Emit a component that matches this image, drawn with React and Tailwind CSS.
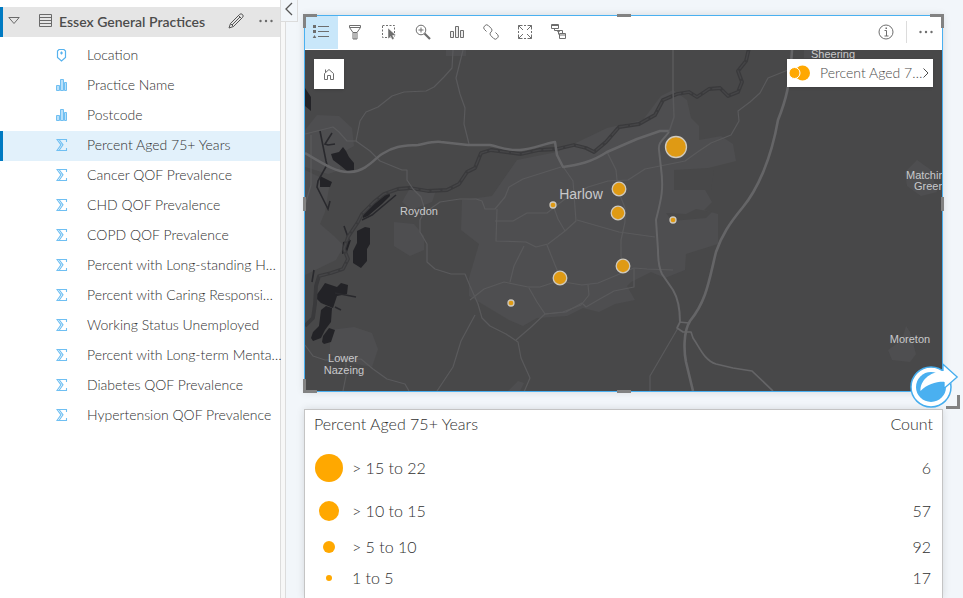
import { useState } from 'react';

const fields = [
    { name: 'Location', type: 'location' },
    { name: 'Practice Name', type: 'string' },
    { name: 'Postcode', type: 'string' },
    { name: 'Percent Aged 75+ Years', type: 'number' },
    { name: 'Cancer QOF Prevalence', type: 'number' },
    { name: 'CHD QOF Prevalence', type: 'number' },
    { name: 'COPD QOF Prevalence', type: 'number' },
    { name: 'Percent with Long-standing H…', type: 'number' },
    { name: 'Percent with Caring Responsi…', type: 'number' },
    { name: 'Working Status Unemployed', type: 'number' },
    { name: 'Percent with Long-term Menta…', type: 'number' },
    { name: 'Diabetes QOF Prevalence', type: 'number' },
    { name: 'Hypertension QOF Prevalence', type: 'number' },
];

const legend = [
    { label: '> 15 to 22', count: 6, dot: 'size-7', row: 'h-[46px]' },
    { label: '> 10 to 15', count: 57, dot: 'size-5', row: 'h-[39px]' },
    { label: '> 5 to 10', count: 92, dot: 'size-3', row: 'h-[33px]' },
    { label: '1 to 5', count: 17, dot: 'size-1.5', row: 'h-[29px]' },
];

const practices = [
    { x: 676, y: 147, r: 10.5 },
    { x: 619, y: 189, r: 6.8 },
    { x: 618, y: 213, r: 6.8 },
    { x: 553, y: 205, r: 3 },
    { x: 673, y: 220, r: 3 },
    { x: 623, y: 266, r: 6.8 },
    { x: 560, y: 278, r: 6.8 },
    { x: 511, y: 303, r: 3 },
];

const tools = [
    {
        name: 'Legend',
        art: (
            <>
                <path d="M5 2.500h11M5 7.500h11M5 12.500h11" />
                <path d="M0 1h3v3H0zM0 6h3v3H0zM1.500 11l1.800 3H-.3z" fill="currentColor" stroke="none" />
            </>
        ),
    },
    {
        name: 'Filter',
        art: <path d="M2.500 1.500h11v2l-3.500 5h-4l-3.500-5zM2.500 3.500h11M6 8.500V15h4V8.500M8 9v6" />,
    },
    {
        name: 'Selection tools',
        art: (
            <>
                <path d="M1.500 1.500h12v12h-12z" strokeDasharray="2 1.500" />
                <path d="M7 4v11l2.600-2.400 1.600 3.200 2-1-1.600-3.200 3.400-.3z" fill="currentColor" stroke="#fff" strokeWidth=".5" />
            </>
        ),
    },
    {
        name: 'Zoom tools',
        art: (
            <>
                <circle cx="6" cy="6" r="4.800" />
                <path d="M3.500 6h5M6 3.500v5" />
                <path d="M9.500 9.500l5.500 5.500" strokeWidth="2.200" />
            </>
        ),
    },
    {
        name: 'Chart type',
        art: <path d="M1.500 7.500h3v6h-3zM6.500 2.500h3v11h-3zM11.500 6.500h3v7h-3z" fill="#ececec" />,
    },
    {
        name: 'Sync extent',
        art: (
            <>
                <path d="M3.500 7.500L1.400 5.400a2.300 2.300 0 0 1 0-3.200l.7-.7a2.300 2.300 0 0 1 3.200 0l3 3a2.300 2.300 0 0 1 0 3.200l-.8.8" />
                <path d="M12.500 8.500l2.100 2.100a2.300 2.300 0 0 1 0 3.200l-.7.7a2.300 2.300 0 0 1-3.200 0l-3-3a2.300 2.300 0 0 1 0-3.200l.8-.8" />
            </>
        ),
    },
    {
        name: 'Maximize',
        art: (
            <>
                <path d="M1.500 5.500v-4h4M10.500 1.500h4v4M14.500 10.500v4h-4M5.500 14.500h-4v-4" />
                <path d="M1.500 1.500l4.500 4.500M14.500 1.500L10 6M14.500 14.500L10 10M1.500 14.500L6 10" />
                <path d="M1.500 7v2M14.500 7v2M7 1.500h2M7 14.500h2" />
            </>
        ),
    },
    {
        name: 'Actions',
        art: (
            <>
                <path d="M.5.5h7v4h-7zM.5 1.500h7M8.500 9.500h6v5h-6zM8.500 11h6" />
                <path d="M3.500 4.500v2h8v3M7.500 6.500v4" />
                <path d="M5.500 6.500h4l-2 2.500z" fill="currentColor" stroke="none" />
            </>
        ),
    },
];

function FieldIcon({ type }) {
    if (type === 'location') {
        return (
            <svg className="h-3.5 w-3 shrink-0 text-[#56b2ee]" viewBox="0 0 12 14" fill="none" stroke="currentColor" strokeWidth="1.200">
                <path d="M3 1.500h5l1.500 1.500V9.500l-4 3.500-4-3.500V3z" />
                <path d="M5.500 3.500v3M4 5h3" />
            </svg>
        );
    }
    if (type === 'string') {
        return (
            <svg className="size-3 shrink-0 text-[#6fbff2]" viewBox="0 0 12 12" fill="#b9e0f9" stroke="currentColor">
                <path d="M.5 6.500h3v5h-3zM4.500.5h3v11h-3zM8.500 3.500h2v8h-2z" />
            </svg>
        );
    }
    return (
        <svg className="size-3 shrink-0 text-[#6fbff2]" viewBox="0 0 12 12" fill="none" stroke="currentColor" strokeWidth="1.100">
            <path d="M10.500 3V.5H1l4 5.300-4 5.700h9.500V9" />
            <path d="M3 .5l4 5.300-4 5.700" />
        </svg>
    );
}

function Sidebar() {
    const [selected, setSelected] = useState('Percent Aged 75+ Years');

    return (
        <aside className="w-[281px] shrink-0 border-r border-[#dcdcdc] bg-white pt-[7px]">
            <header className="flex h-[30px] items-center border-l-[3px] border-[#007ac2] bg-[#e5e5e5] px-[5px] pb-0.5">
                <button aria-label="Collapse dataset" className="text-[#6a6a6a]">
                    <svg className="size-3" viewBox="0 0 12 12" fill="none" stroke="currentColor">
                        <path d="M.8 2.500h10.400L6 8.500z" />
                    </svg>
                </button>
                <svg className="ml-[19px] h-[14px] w-[13px] text-[#6a6a6a]" viewBox="0 0 13 14" fill="none" stroke="currentColor">
                    <path d="M.5.5h12v12H.5zM.5 3.500h12M.5 6.500h12M.5 9.500h12" />
                </svg>
                <h2 className="ml-[7px] flex-1 pt-0.5 text-sm font-semibold whitespace-nowrap text-[#4c4c4c]">Essex General Practices</h2>
                <button aria-label="Rename dataset" className="mr-[14px] text-[#555]">
                    <svg className="size-4" viewBox="0 0 16 16" fill="none" stroke="currentColor" strokeLinejoin="round">
                        <path d="M1 15l1.500-4.500L11.500 1.500a1.800 1.800 0 0 1 3 3L5.500 13.500zM2.500 10.500l3 3M10.500 2.500l3 3M4 12l8-8" />
                    </svg>
                </button>
                <button aria-label="Dataset options" className="mr-px text-[#6a6a6a]">
                    <svg className="size-4" viewBox="0 0 16 16" fill="currentColor">
                        <circle cx="2.500" cy="8" r="1.200" />
                        <circle cx="8" cy="8" r="1.200" />
                        <circle cx="13.500" cy="8" r="1.200" />
                    </svg>
                </button>
            </header>
            <ul className="pt-1">
                {fields.map(field => (
                    <li key={field.name}>
                        <button
                            onClick={() => setSelected(field.name)}
                            className={`flex h-[30px] w-full items-center gap-[19px] border-l-[3px] pb-0.5 pl-[53px] text-left text-sm font-light whitespace-nowrap ${selected === field.name
                                ? 'border-[#007ac2] bg-[#e2f1fb]'
                                : 'border-transparent'}`}
                        >
                            <FieldIcon type={field.type} />
                            <span>{field.name}</span>
                        </button>
                    </li>
                ))}
            </ul>
        </aside>
    );
}

function Basemap() {
    return (
        <svg className="block aspect-[637/341] w-full bg-[#484849]" viewBox="305 50 637 341" fill="none" role="img" aria-label="Map of general practices around Harlow">
            {/* built-up areas */}
            <g fill="#4e4e50">
                <path d="M305 130l12-15 22 1 13 12 2 18-14 8 0 16-12 4-23-7zM305 170l25 12-5 30-5 12 14 12 10 10-8 14-31 15z" />
                <path d="M394 222l20 2 10 12 0 14-14 6-16-10zM410 188l26 2-4 12-20 8-10-8z" />
                <path d="M462 200l30-4 25-36 40-8 50-24 36-8 18-24 12-6 14 10 4 18 8 8 0 14 22-4 12 8 3 17-28 7-34 2 0 18 30 0 8 14-8 8 14 4 0 30-32 10-1 16-20 8-14-6-20 10-4 4 8 14-20 4-16 8-16-4-16 8-30 2-14 8-14-6-40-24 0-18 10-34-18-14z" />
                <path d="M330 330l24-3 18 6 6 16-6 18-22-4-20-8zM905 172l12-12 14 10 6 22-16 4-14-10zM888 350l14-10 4-14 4 6 6 22-6 8-18-2z" />
                <path d="M804 50h26v8h-26zM446 50h20v6h-20zM508 391l10-10 6 2-4 8z" />
            </g>
            <path d="M674 170h40l-3 20-37 0zM666 213l20 1 10-5 16 3-6 6-34 3z" fill="#484849" />

            {/* lakes */}
            <g fill="#232327">
                <path d="M305 88l6 9v14l-6-5zM331 154l8-2 4-5 3 4 3 6 5 6 0 7-7 1-6-5-8-6zM320 176l12 6-2 5-10 0z" />
                <path d="M361 213l20-18 8-4 1 5-8 8-14 12-5 2zM357 231l8-4 5 1v16l-3 5v12l-6 7-8-5 0-12 4-8zM343 242l8-2-4 12-5 2z" />
                <path d="M321 289l4-6 12 4 4-4 7 2-1 9-10 2-4 12-12-5-6-6zM321 310l5-4 6 2-1 14-6 8-4 8-8 3-2-3 2-6 6-6zM323 336l6-8 6 2-4 12-7 2-2-2z" />
            </g>
            <g stroke="#29292d" strokeWidth="1.600">
                <path d="M320 131l6 30 1 4-9 16-1 6 6 12 5 10 2-8M332 133l-7 11 3 1 7-1" />
                <path d="M335 293l21 4M335 307l6 3M314 270l-2 12M362 220l10-5 24-20M344 226l5 14" />
            </g>

            {/* river */}
            <path d="M305 326l8-8 2-14 1-18 3-10 12-3 12-4 5-10-4-10 4-12 10-15 4-8 12-12 10-8 14-5 12-1 18 3 19-1 12-6 8-12 8-4 6-15 10-3 30 4 18-4 18-1 17-4 12 3 8 4 12-10 13-15 20-3 16-9 8-15 14-6 12-2 8 5 12-8 11-1 8 8 10-4 4-10-4-11 8-10 3-13" stroke="#3a3a3c" strokeWidth="3.800" strokeLinejoin="round" />
            <path d="M319 276l12-3 12-4 5-10-4-10 4-12 10-15 4-8 12-12 10-8 14-5 12-1 18 3 19-1 12-6 8-12 8-4 6-15 10-3 30 4 18-4 18-1 17-4 12 3 8 4 12-10 13-15 20-3 16-9 8-15 14-6 12-2 8 5 12-8 11-1 8 8 10-4 4-10-4-11 8-10 3-13" stroke="#454547" strokeWidth="1.400" strokeDasharray="9 2" />

            {/* minor roads */}
            <g stroke="#5a5a5c" strokeWidth="1.200" strokeLinejoin="round">
                <path d="M305 134l28-7 6 5 8 9h9l14 10 10 10 22 9 5 0 0 10 6 9 8 8 4 13-5 10 0 12 7 12 0 18 8 7 16 5h14l5 12 8 18 4 14 8 8 16 8 12 8 3 16 9 20-6 14 4 8" />
                <path d="M356 141l4-20 6-9 12-5 14-11 12-4 22-1 8-4 10-10 8-9 1-18M356 141l1 1M463 50l-7 28 4 16 5 14-1 16 5 20" />
                <path d="M430 209l10-7 20-3h16l6 2 3 8h10l10-12 4-10 14-8 38-12M497 209l-1 32 30 1 10 5 12-3 17-13 11-10-3-40-9-13M495 221l18 0 14-8h20l18-14 23-12 20-6 20-1 17-11 40-8 14-10 12-8 20-8 8-14-1-10 12-9 10-9 8-15 20-8" />
                <path d="M607 152l9 18 2 20 7 18 0 14-4 18 0 16 2 10M577 220l42 12 36 5M553 205l5 14 7 12M547 245l8 20 5 12M524 246l-10 20-4 16M470 300l14-11 20-7 24 5h12l18-6 24 4 16-2 36-15 13 1 26 1M588 285l1 10-8 10-18 7-18 2-8-12-8-14" />
                <path d="M634 269l0 18-20 4-16 9-12 7-4-4-16 9-21 2-15 14-14 12M475 315l-14 26-8 26-16 24M305 345l8 11 12 4 36-1 12 10 14 10 18 5 4 7M346 360l0 16-3 15" />
                <path d="M678 328l-28 48 0 15M305 205l6-20 0-50" />
            </g>

            {/* main roads */}
            <g stroke="#656567" strokeWidth="2" strokeLinejoin="round">
                <path d="M305 153C325 165 338 173 350 172C367 171 375 158 382 154C396 145 405 146 418 145C428 143 434 141 441 142L468 145L490 145C500 147 508 151 520 150C533 149 543 144 555 142L557 155L563 167C578 165 592 162 607 152L637 139L660 131H669" strokeWidth="2.500" />
                <path d="M673 50V90L674 117L669 132" stroke="#59595b" strokeWidth="1.500" />
                <path d="M669 132C663 140 658 142 659 150L661 168C664 190 661 200 656 220L658 250C658 262 660 270 662 274L673 290C679 300 680 310 680 322" />
                <path d="M792 50C790 85 786 100 778 120C771 160 757 190 743 207C729 224 722 235 716 252C709 280 707 300 690 321C683 332 684 352 686 362L693 391" strokeWidth="2.600" />
                <path d="M680 322l-3 6 6 4 8 0 2 6C700 348 704 360 716 364L733 368L752 371L773 391M679 322l10 1" strokeWidth="1.700" />
            </g>

            <g fill="#c9c9cb" className="font-['Liberation_Sans',Arial,sans-serif] text-[11px]">
                <text x="833" y="58" textAnchor="middle">Sheering</text>
                <text x="419" y="215" textAnchor="middle">Roydon</text>
                <text x="343" y="362" textAnchor="middle">Lower</text>
                <text x="344" y="374" textAnchor="middle">Nazeing</text>
                <text x="910" y="343" textAnchor="middle">Moreton</text>
                <text x="906" y="179">Matchin</text>
                <text x="914" y="190">Green</text>
                <text x="581" y="199" textAnchor="middle" className="text-[14px]">Harlow</text>
            </g>

            <g fill="#df9a14" stroke="#cfc9bd" strokeWidth="1.300">
                {practices.map(p => (
                    <circle key={`${p.x}-${p.y}`} cx={p.x} cy={p.y} r={p.r} />
                ))}
            </g>
        </svg>
    );
}

function ResizeHandles() {
    return (
        <div className="pointer-events-none">
            <span className="absolute -top-0.5 -left-0.5 size-3.5 border-t-[3px] border-l-[3px] border-[#828282]" />
            <span className="absolute -top-0.5 -right-0.5 size-3.5 border-t-[3px] border-r-[3px] border-[#828282]" />
            <span className="absolute -bottom-0.5 -left-0.5 size-3.5 border-b-[3px] border-l-[3px] border-[#828282]" />
            <span className="absolute -right-[18px] -bottom-[18px] size-3.5 border-r-[3px] border-b-[3px] border-[#828282]" />
            <span className="absolute inset-x-0 -top-0.5 mx-auto h-[3px] w-3.5 bg-[#828282]" />
            <span className="absolute inset-x-0 -bottom-0.5 mx-auto h-[3px] w-3.5 bg-[#828282]" />
            <span className="absolute inset-y-0 -left-0.5 my-auto h-3.5 w-[3px] bg-[#828282]" />
            <span className="absolute inset-y-0 -right-0.5 my-auto h-3.5 w-[3px] bg-[#828282]" />
        </div>
    );
}

function MapCard() {
    const [active, setActive] = useState('Legend');

    return (
        <section className="relative border border-[#4ab0f0] bg-white shadow-[0_0_8px_rgba(0,0,0,0.12)]">
            <div className="flex h-[34px] items-center justify-between text-[#6e6e6e]">
                <div className="flex h-full gap-px">
                    {tools.map(tool => (
                        <button
                            key={tool.name}
                            aria-label={tool.name}
                            onClick={() => setActive(tool.name)}
                            className={`flex h-[33px] w-[33px] items-center justify-center pr-px pb-0.5 ${active === tool.name ? 'bg-[#c9e7fa]' : ''}`}
                        >
                            <svg className="size-4 overflow-visible" viewBox="0 0 16 16" fill="none" stroke="currentColor">{tool.art}</svg>
                        </button>
                    ))}
                </div>
                <div className="flex items-center pr-2 pb-0.5">
                    <button aria-label="Card information">
                        <svg className="size-4" viewBox="0 0 16 16" fill="none" stroke="currentColor">
                            <circle cx="8" cy="8" r="7" />
                            <path d="M6.500 6.500H8.500V12M6.500 12h4" />
                            <path d="M7.500 3.500h1.500V5H7.500z" fill="currentColor" stroke="none" />
                        </svg>
                    </button>
                    <span className="mr-[11px] ml-3 h-[22px] w-px bg-[#dcdcdc]" />
                    <button aria-label="Card options">
                        <svg className="size-4" viewBox="0 0 16 16" fill="currentColor">
                            <circle cx="2.500" cy="8" r="1.200" />
                            <circle cx="8" cy="8" r="1.200" />
                            <circle cx="13.500" cy="8" r="1.200" />
                        </svg>
                    </button>
                </div>
            </div>

            <div className="relative">
                <Basemap />
                <button aria-label="Default extent" className="absolute top-[9px] left-[9px] flex size-[30px] items-center justify-center bg-white text-[#6e6e6e] shadow">
                    <svg className="size-3" viewBox="0 0 12 12" fill="none" stroke="currentColor">
                        <path d="M1.500 11.500V5.500L6 1.500l4.500 4v6h-3v-4h-3v4zM2.500 4V1.500" />
                    </svg>
                </button>
                <button className="absolute top-[9px] right-[9px] flex h-7 w-[146px] items-center bg-white pr-[3px] pl-0.5 text-sm font-light text-[#4c4c4c] shadow">
                    <svg className="h-4 w-[22px] shrink-0" viewBox="0 0 22 16" fill="#ffa800">
                        <circle cx="13.500" cy="8" r="7.500" />
                        <circle cx="5.500" cy="8" r="5.500" stroke="#fff" />
                    </svg>
                    <span className="ml-[9px] flex-1 text-left whitespace-nowrap">Percent Aged 7…</span>
                    <svg className="h-3 w-2 shrink-0" viewBox="0 0 8 12" fill="none" stroke="currentColor">
                        <path d="M1.500 1.500L6 6l-4.500 4.500" />
                    </svg>
                </button>
            </div>

            <ResizeHandles />
            <button aria-label="Drag card" className="absolute -right-[17px] -bottom-[18px]">
                <svg className="block h-[46px] w-[50px]" viewBox="0 0 50 46" fill="#fff" stroke="#45adee">
                    <circle cx="22" cy="24" r="20" strokeWidth="1.500" />
                    <circle cx="22" cy="24" r="15" fill="#4ab0f0" stroke="none" />
                    <path d="M34 .9L49 14 35 26v-7.300C27 18.500 18 21 11.500 28C11 18 20 9 34 8z" stroke="none" />
                    <path d="M34 8V1.200L48.200 14 35 25.500V19" fill="none" strokeWidth="1.300" />
                </svg>
            </button>
        </section>
    );
}

function LegendCard() {
    return (
        <section className="flex-1 border border-b-0 border-[#c4c4c4] bg-white px-[9px] shadow-[0_0_8px_rgba(0,0,0,0.12)]">
            <table className="w-full text-base font-light">
                <thead>
                    <tr className="h-[35px] align-top leading-7">
                        <th colSpan={2} className="text-left font-light">Percent Aged 75+ Years</th>
                        <th className="text-right font-light">Count</th>
                    </tr>
                </thead>
                <tbody>
                    {legend.map(item => (
                        <tr key={item.label} className={item.row}>
                            <td className="w-[38px]">
                                <div className="flex w-[30px] justify-center">
                                    <span className={`rounded-full bg-[#ffa800] ${item.dot}`} />
                                </div>
                            </td>
                            <td>{item.label}</td>
                            <td className="pr-0.5 text-right">{item.count}</td>
                        </tr>
                    ))}
                </tbody>
            </table>
        </section>
    );
}

export default function App() {
    return (
        <div className="flex h-screen overflow-hidden bg-[#f2f6fa] font-[Lato,sans-serif] text-[#303030]">
            <Sidebar />
            <div className="relative w-[5px] shrink-0 border-r border-[#dcdcdc] bg-[#f7f7f7]">
                <button aria-label="Hide data pane" className="absolute top-0 left-0 flex h-[22px] w-[17px] items-start justify-center border-r border-b border-[#dcdcdc] bg-[#f2f6fa] pt-0.5 text-[#555]">
                    <svg className="h-3.5 w-2" viewBox="0 0 8 14" fill="none" stroke="currentColor" strokeWidth="1.300">
                        <path d="M7 1L1 7l6 6" />
                    </svg>
                </button>
            </div>
            <main className="flex min-w-0 flex-1 flex-col gap-[17px] pt-[15px] pr-5 pl-[18px]">
                <MapCard />
                <LegendCard />
            </main>
        </div>
    );
}
